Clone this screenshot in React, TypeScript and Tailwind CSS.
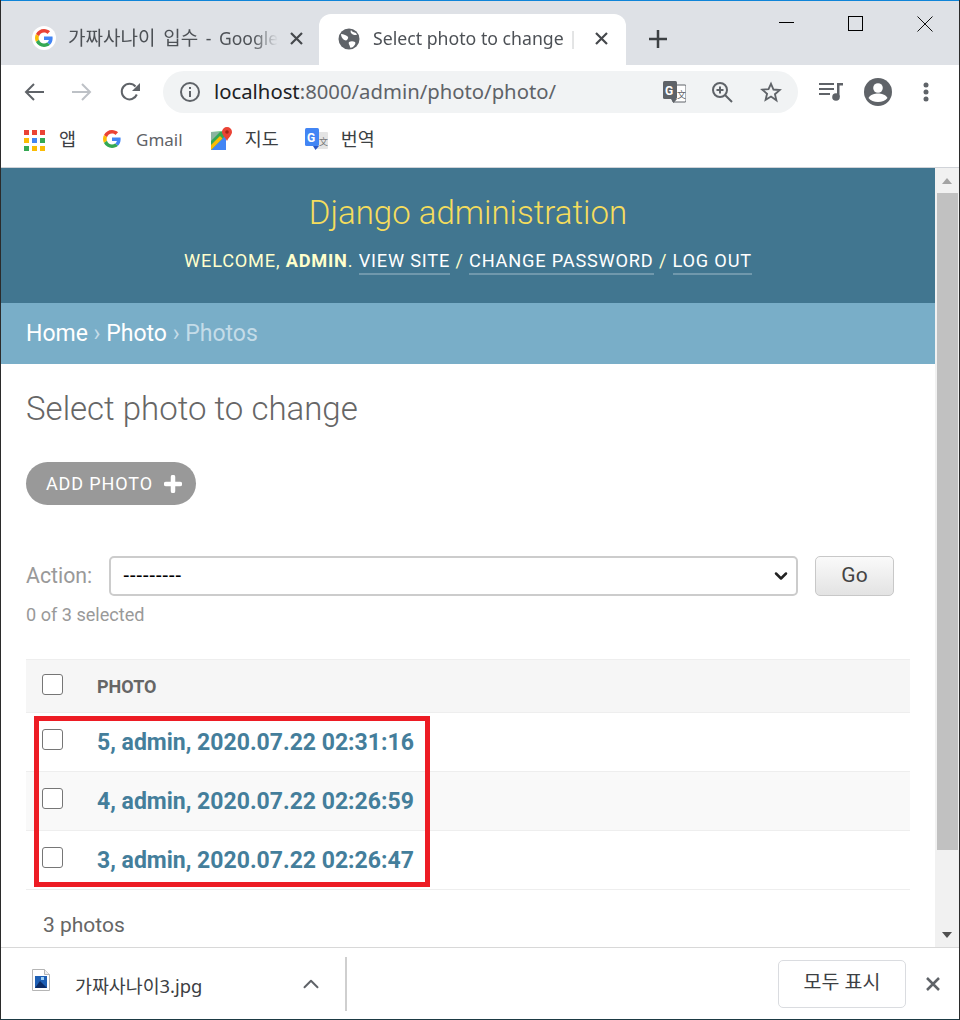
import { ChevronDown, ChevronUp } from 'lucide-react';

const chromeFont = 'font-["Noto_Sans","Noto_Sans_CJK_KR",sans-serif]';
const adminFont = 'font-["Roboto","Noto_Sans_CJK_KR",sans-serif]';

function GoogleG({ size }: { size: number }) {
  return (
    <svg width={size} height={size} viewBox="0 0 48 48">
      <path fill="#EA4335" d="M24 9.5c3.5 0 6.700 1.200 9.200 3.600l6.900-6.900C35.900 2.400 30.500 0 24 0 14.600 0 6.500 5.400 2.600 13.200l8 6.200C12.500 13.700 17.800 9.500 24 9.500z" />
      <path fill="#4285F4" d="M46.980 24.550c0-1.570-.15-3.090-.38-4.550H24v9.020h12.940c-.58 2.960-2.260 5.480-4.780 7.180l7.730 6c4.510-4.180 7.090-10.360 7.090-17.650z" />
      <path fill="#FBBC05" d="M10.530 28.590c-.48-1.450-.76-2.990-.76-4.590s.27-3.140.76-4.590l-7.980-6.190C.92 16.460 0 20.120 0 24c0 3.880.92 7.540 2.560 10.780l7.970-6.190z" />
      <path fill="#34A853" d="M24 48c6.480 0 11.930-2.130 15.890-5.810l-7.730-6c-2.150 1.450-4.920 2.300-8.160 2.300-6.260 0-11.570-4.220-13.470-9.910l-7.980 6.190C6.510 42.620 14.620 48 24 48z" />
    </svg>
  );
}

function TabClose() {
  return (
    <svg width="13" height="13" viewBox="0 0 13 13" className="shrink-0">
      <path d="M1 1l11 11M12 1L1 12" stroke="#45484c" strokeWidth="2.200" />
    </svg>
  );
}

function TranslateIcon({ mono }: { mono?: boolean }) {
  return (
    <svg width="23" height="24" viewBox="0 0 23 24">
      <path d="M9 5h13a1 1 0 0 1 1 1v15a1 1 0 0 1-1 1H10z" fill={mono ? '#fff' : '#e4e4e4'} stroke={mono ? '#5f6368' : 'none'} strokeWidth="1" />
      <rect x="0" y="1" width="14" height="18" rx="1.500" fill={mono ? '#5f6368' : '#4285f4'} />
      <path d="M8 19h6l-3.500 4z" fill={mono ? '#5f6368' : '#2a56c6'} />
      <text x="2" y="15" fontSize="12" fontWeight="700" fill="#fff" fontFamily="Roboto, sans-serif">G</text>
      <text x="14" y="18" fontSize="9" fill={mono ? '#5f6368' : '#777'} fontFamily="Noto Sans CJK SC, sans-serif">文</text>
    </svg>
  );
}

function Checkbox() {
  return <span className="block h-[21px] w-[21px] rounded-[3px] border border-[#767676] bg-white" />;
}

function Row({ label, shaded }: { label: string; shaded?: boolean }) {
  return (
    <div className={`flex h-[59px] items-center border-b border-[#eeeeee] pl-[16px] ${shaded ? 'bg-[#f9f9f9]' : 'bg-white'}`}>
      <span className="-mt-1.5">
        <Checkbox />
      </span>
      <a className="ml-[34px] mt-[2px] text-[23px] font-bold text-[#447e9b]">{label}</a>
    </div>
  );
}

export default function App() {
  return (
    <div className="flex h-[1020px] w-[960px] flex-col overflow-hidden border-x border-b border-x-[#2b2b2b] border-b-[#1d3a44] bg-white">
      <div className="h-px shrink-0 bg-[#0f84d8]" />

      {/* tab strip */}
      <div className={`flex h-[64px] shrink-0 bg-[#dee1e6] ${chromeFont}`}>
        <div className="flex w-[318px] items-center pb-[3px] pl-[31px] pr-[16px] pt-[13px]">
          <span className="flex h-6 w-6 shrink-0 items-center justify-center rounded-full bg-white">
            <GoogleG size={18} />
          </span>
          <span className="ml-[12px] w-[210px] shrink-0 overflow-hidden whitespace-nowrap text-[17.5px] text-[#4d5156] [word-spacing:3px] [mask-image:linear-gradient(to_right,black_88%,transparent)]">
            <span className="text-[19px]">가짜사나이 입수</span> - Google
          </span>
          <span className="ml-[12px]">
            <TabClose />
          </span>
        </div>
        <div className="mt-[13px] flex h-[51px] w-[307px] items-center rounded-t-[12px] bg-white pb-[2px] pl-[19px]">
          <svg width="22" height="22" viewBox="0 0 22 22" className="shrink-0">
            <circle cx="11" cy="11" r="10.500" fill="#5f6368" />
            <path d="M3 6c3 0 4 1 6 2s1 3 0 4-3 0-4-1-2-3-2-5zM11 14c2-1 4-1 6 0 1 1 0 3-2 5-2 1-3 1-3 0 0-2-2-3-1-5zM13 2c1 2 3 2 5 3l1 2c-2 0-4 0-5-1s-2-2-1-4z" fill="#fff" />
          </svg>
          <span className="ml-[13px] w-[203px] shrink-0 whitespace-nowrap text-[17.7px] text-[#4d5156] [mask-image:linear-gradient(to_right,black_94%,transparent)]">
            Select photo to change |
          </span>
          <span className="ml-[19px]">
            <TabClose />
          </span>
        </div>
        <div className="ml-[23px] mt-[14px] flex items-center pb-[2px]">
          <svg width="18" height="18" viewBox="0 0 18 18">
            <path d="M9 0v18M0 9h18" stroke="#3c4043" strokeWidth="2.500" />
          </svg>
        </div>
        <div className="ml-auto flex items-start">
          <div className="mr-[54px] mt-[21px] h-px w-[15px] bg-black" />
          <div className="mr-[54px] mt-[15px] h-[15px] w-[15px] border border-black" />
          <svg width="16" height="16" viewBox="0 0 16 16" className="mr-[26px] mt-[15px]">
            <path d="M.5.5l15 15M15.500.5l-15 15" stroke="#111" strokeWidth="1" />
          </svg>
        </div>
      </div>

      {/* toolbar */}
      <div className={`flex h-[53px] shrink-0 items-center bg-white pl-[23px] ${chromeFont}`}>
        <svg width="20" height="20" viewBox="0 0 20 20">
          <path d="M20 10H2M10 2l-8 8 8 8" fill="none" stroke="#5f6368" strokeWidth="2" />
        </svg>
        <svg width="20" height="20" viewBox="0 0 20 20" className="ml-[28px]">
          <path d="M0 10h18M10 2l8 8-8 8" fill="none" stroke="#bdc1c6" strokeWidth="2" />
        </svg>
        <svg width="20" height="20" viewBox="0 0 20 20" className="ml-[28px]">
          <path d="M16.800 12.500A7.800 7.800 0 1 1 15.500 4.500" fill="none" stroke="#5f6368" strokeWidth="2" />
          <path d="M20 1v8h-8z" fill="#5f6368" />
        </svg>
        <div className="ml-[23px] flex h-[42px] w-[635px] shrink-0 items-center rounded-full bg-[#f1f3f4] pl-[17px]">
          <svg width="20" height="20" viewBox="0 0 20 20" className="shrink-0">
            <circle cx="10" cy="10" r="9" fill="none" stroke="#5f6368" strokeWidth="2" />
            <path d="M10 9v6M10 5v2" stroke="#5f6368" strokeWidth="2" />
          </svg>
          <span className="ml-[14px] text-[20.3px] text-[#5f6368]">
            <span className="text-[#202124]">localhost</span>:8000/admin/photo/photo/
          </span>
          <span className="ml-auto">
            <TranslateIcon mono />
          </span>
          <svg width="22" height="22" viewBox="0 0 22 22" className="ml-[25px]">
            <circle cx="9" cy="9" r="7" fill="none" stroke="#5f6368" strokeWidth="2" />
            <path d="M14 14l7 7M9 5.500v7M5.500 9h7" stroke="#5f6368" strokeWidth="2" />
          </svg>
          <svg width="22" height="22" viewBox="0 0 24 24" className="ml-[27px] mr-[16px]">
            <path d="M12 3l2.700 6.300 6.800.6-5.200 4.500 1.600 6.700L12 17l-5.900 3.600 1.600-6.700-5.200-4.500 6.800-.6z" fill="none" stroke="#5f6368" strokeWidth="2" />
          </svg>
        </div>
        <svg width="24" height="20" viewBox="0 0 24 20" className="ml-[21px] shrink-0">
          <path d="M0 2h15M0 7h15M0 12h11M0 17h0" stroke="#5f6368" strokeWidth="2" />
          <path d="M18 1h6v2.500h-3.500V15h-2.500z" fill="#5f6368" />
          <circle cx="17" cy="15" r="3.800" fill="#5f6368" />
        </svg>
        <svg width="28" height="28" viewBox="0 0 28 28" className="ml-[21px] shrink-0">
          <circle cx="14" cy="14" r="14" fill="#5f6368" />
          <circle cx="14" cy="10" r="4.800" fill="#fff" />
          <path d="M4.500 20c2-3.500 6-4.500 9.500-4.500s7.500 1 9.500 4.500c-2 2.500-5.500 4-9.500 4s-7.500-1.500-9.500-4z" fill="#fff" />
        </svg>
        <svg width="6" height="20" viewBox="0 0 6 20" className="ml-[31px] shrink-0">
          <circle cx="3" cy="3" r="2.500" fill="#5f6368" />
          <circle cx="3" cy="10" r="2.500" fill="#5f6368" />
          <circle cx="3" cy="17" r="2.500" fill="#5f6368" />
        </svg>
      </div>

      {/* bookmarks */}
      <div className={`flex h-[50px] shrink-0 items-start border-b border-[#d0d3d8] bg-white pl-[23px] pt-[10px] text-[18.5px] text-[#3c4043] ${chromeFont}`}>
        <div className="mt-[2px] grid grid-cols-3 gap-[3px]">
          {['#ea4335', '#ea4335', '#ea4335', '#fbbc05', '#4285f4', '#34a853', '#34a853', '#fbbc05', '#fbbc05'].map((color, index) => (
            <span key={index} className="h-[5px] w-[5px]" style={{ backgroundColor: color }} />
          ))}
        </div>
        <span className="ml-[14px] leading-[22px]">앱</span>
        <span className="ml-[27px] mt-[2px]">
          <GoogleG size={18} />
        </span>
        <span className="ml-[15px] text-[17px] leading-[24px] text-[#5f6368]">Gmail</span>
        <svg width="22" height="24" viewBox="0 0 22 24" className="-mt-[1px] ml-[27px]">
          <path d="M1 5l15-1v18l-15 1z" fill="#34a853" />
          <path d="M1 23l15-15v15z" fill="#4285f4" />
          <path d="M1 18l9-9 2.500 2.500L3 21l-2 2z" fill="#fbbc05" />
          <path d="M1 5h9L1 14z" fill="#8ab4a0" />
          <path d="M17 0a5 5 0 0 1 5 5c0 3-3 5-5 9-2-4-5-6-5-9a5 5 0 0 1 5-5z" fill="#ea4335" />
          <circle cx="17" cy="5" r="1.800" fill="#a52714" />
        </svg>
        <span className="ml-[13px] leading-[22px]">지도</span>
        <span className="-mt-[1px] ml-[26px]">
          <TranslateIcon />
        </span>
        <span className="ml-[13px] leading-[22px]">번역</span>
      </div>

      {/* page */}
      <div className="relative flex min-h-0 flex-1 overflow-hidden">
        <div className={`min-w-0 flex-1 overflow-hidden ${adminFont}`}>
          <header className="flex h-[135px] flex-col items-center bg-[#417690] pt-[23px]">
            <h1 className="text-[33px] font-light leading-[44px] text-[#f5dd5d]">Django administration</h1>
            <div className="mt-[12px] text-[18.2px] uppercase leading-[28px] tracking-[0.8px] text-[#ffffcc]">
              Welcome, <strong className="font-bold">admin</strong>.{' '}
              <a className="border-b-2 border-[#ffffff40] pb-[2px] text-white">View site</a> /{' '}
              <a className="border-b-2 border-[#ffffff40] pb-[2px] text-white">Change password</a> /{' '}
              <a className="border-b-2 border-[#ffffff40] pb-[2px] text-white">Log out</a>
            </div>
          </header>

          <nav className="flex h-[61px] items-center bg-[#79aec8] pl-[25px] pt-[1px] text-[23px] text-[#c4dce8]">
            <a className="text-white">Home</a>
            <span className="whitespace-pre"> › </span>
            <a className="text-white">Photo</a>
            <span className="whitespace-pre"> › Photos</span>
          </nav>

          <main className="pl-[25px] pr-[25px]">
            <h2 className="mt-[23px] text-[33px] font-light leading-[44px] text-[#666666]">Select photo to change</h2>

            <a className="mt-[31px] flex h-[43px] w-[170px] items-center rounded-full bg-[#999999] pl-[20px] text-[18px] uppercase tracking-[0.875px] text-white">
              Add photo
              <svg width="18" height="18" viewBox="0 0 18 18" className="ml-[11px]">
                <path d="M9 2v14M2 9h14" stroke="#fff" strokeWidth="4.500" strokeLinecap="round" />
              </svg>
            </a>

            <div className="mt-[51px] flex items-center">
              <span className="w-[83px] text-[21.3px] text-[#999999]">Action:</span>
              <div className="flex h-[40px] w-[689px] items-center justify-between rounded-[5px] border-2 border-[#cccccc] bg-white pl-[12px] pr-[5px] text-[19.5px] text-black">
                <span className="font-['Liberation_Sans',sans-serif]">---------</span>
                <ChevronDown size={20} strokeWidth={3} color="#222222" />
              </div>
              <button className="ml-[17px] flex h-[40px] w-[79px] items-center justify-center rounded-[5px] border border-[#c8c8c8] bg-gradient-to-b from-[#fafafa] to-[#e3e3e3] text-[21px] text-[#444444]">
                Go
              </button>
            </div>
            <p className="mt-[8px] text-[18.1px] leading-[22px] text-[#999999]">0 of 3 selected</p>

            <div className="relative mt-[33px]">
              <div className="flex h-[54px] items-center border-y border-[#eeeeee] bg-[#f6f6f6] pl-[16px]">
                <span className="-mt-1">
                  <Checkbox />
                </span>
                <span className="ml-[34px] text-[18px] font-bold uppercase text-[#666666]">Photo</span>
              </div>
              <Row label="5, admin, 2020.07.22 02:31:16" />
              <Row label="4, admin, 2020.07.22 02:26:59" shaded />
              <Row label="3, admin, 2020.07.22 02:26:47" />
              <div className="pointer-events-none absolute left-[8px] top-[57px] h-[171px] w-[396px] border-[5px] border-[#ed1c24]" />
            </div>

            <p className="mt-[21px] pl-[17px] text-[21px] leading-[28px] text-[#666666]">3 photos</p>
          </main>
        </div>

        {/* scrollbar */}
        <div className="flex w-[24px] shrink-0 flex-col items-center bg-[#f1f1f1]">
          <div className="flex h-[25px] shrink-0 items-center justify-center">
            <span className="h-0 w-0 border-x-[5.5px] border-b-[6px] border-x-transparent border-b-[#a3a3a3]" />
          </div>
          <div className="h-[657px] w-[21px] shrink-0 bg-[#c1c1c1]" />
          <div className="mt-auto flex h-[25px] shrink-0 items-center justify-center">
            <span className="h-0 w-0 border-x-[5.5px] border-t-[6px] border-x-transparent border-t-[#505050]" />
          </div>
        </div>
      </div>

      {/* download shelf */}
      <div className={`flex h-[72px] shrink-0 items-center border-t border-[#d8d8d8] bg-white ${chromeFont}`}>
        <svg width="18" height="22" viewBox="0 0 18 22" className="-mt-[8px] ml-[31px] shrink-0">
          <path d="M.5.500h12l5 5v16H.5z" fill="#fff" stroke="#b5b5b5" />
          <path d="M12.500.500v5h5" fill="#eee" stroke="#b5b5b5" />
          <rect x="3" y="7" width="12" height="12" fill="#1e5fb4" />
          <path d="M3 19l5-7 3 3 4 4z" fill="#0d2c66" />
          <rect x="9" y="8" width="3" height="3" fill="#9fd0f5" />
        </svg>
        <span className="ml-[25px] mt-[4px] w-[130px] shrink-0 whitespace-nowrap text-[18.4px] text-[#3c4043]">가짜사나이3.jpg</span>
        <ChevronUp size={26} strokeWidth={1.800} color="#5f6368" className="ml-[93px] shrink-0" />
        <div className="ml-[21px] h-[54px] w-[2px] shrink-0 bg-[#cfcfcf]" />
        <button className="ml-auto flex h-[48px] w-[128px] items-center justify-center rounded-[5px] border border-[#dadce0] bg-white pb-[4px] text-[19.5px] text-[#3c4043]">
          모두 표시
        </button>
        <svg width="14" height="14" viewBox="0 0 14 14" className="ml-[20px] mr-[19px] shrink-0">
          <path d="M1 1l12 12M13 1L1 13" stroke="#5f6368" strokeWidth="2.500" />
        </svg>
      </div>
    </div>
  );
}
